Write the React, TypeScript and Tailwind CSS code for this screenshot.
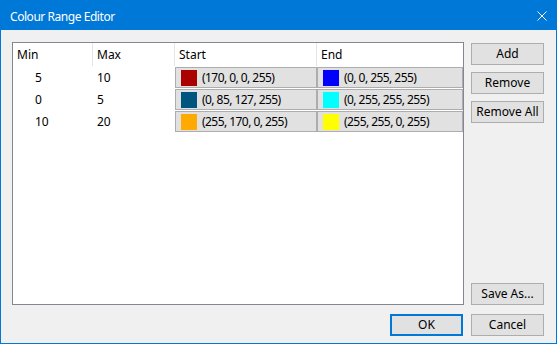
import React from 'react';

const rows = [
  { min: '5', max: '10', start: { c: '#aa0000', t: '(170, 0, 0, 255)' }, end: { c: '#0000ff', t: '(0, 0, 255, 255)' } },
  { min: '0', max: '5', start: { c: '#00557f', t: '(0, 85, 127, 255)' }, end: { c: '#00ffff', t: '(0, 255, 255, 255)' } },
  { min: '10', max: '20', start: { c: '#ffaa00', t: '(255, 170, 0, 255)' }, end: { c: '#ffff00', t: '(255, 255, 0, 255)' } },
];

function ColourButton({ colour, label }: { colour: string; label: string }) {
  return (
    <div className="mt-[1px] h-[21px] flex items-center border border-[#adadad] bg-[#e1e1e1] pl-[5px]">
      <div className="w-[16px] h-[16px]" style={{ backgroundColor: colour }} />
      <span className="ml-[5px] leading-none tracking-[-0.55px]">{label}</span>
    </div>
  );
}

function Button({ label, primary }: { label: string; primary?: boolean }) {
  return (
    <button
      className={`w-[73px] h-[22px] flex items-center justify-center bg-[#e1e1e1] leading-none ${
        primary ? 'border-2 border-[#0078d7]' : 'border border-[#adadad]'
      }`}
    >
      {label}
    </button>
  );
}

export default function App() {
  return (
    <div
      className="w-[557px] h-[344px] flex flex-col border border-[#0078d7] bg-[#f0f0f0] text-[12px] text-black"
      style={{ fontFamily: '"Noto Sans", "Open Sans", sans-serif' }}
    >
      {/* Title bar */}
      <div className="h-[29px] bg-[#0078d7] flex items-center justify-between text-white">
        <span className="pl-[9px] pt-[2px] tracking-[-0.45px]">Colour Range Editor</span>
        <svg width="10" height="10" viewBox="0 0 10 10" className="mr-[9px] mt-[1px]">
          <path d="M0.5 0.5 L9.5 9.5 M9.5 0.5 L0.5 9.5" stroke="white" strokeWidth="1" />
        </svg>
      </div>

      <div className="flex-1 flex flex-col pt-[12px] pl-[11px]">
        <div className="flex gap-[7px]">
          {/* List */}
          <div className="w-[452px] h-[263px] border border-[#828790] bg-white">
            <div className="grid grid-cols-[80px_82px_142px_146px] h-[23px]">
              <div className="border-r border-[#e5e5e5] pl-[4px] flex items-center">Min</div>
              <div className="border-r border-[#e5e5e5] pl-[4px] flex items-center">Max</div>
              <div className="border-r border-[#e5e5e5] pl-[4px] flex items-center">Start</div>
              <div className="pl-[4px] flex items-center">End</div>
            </div>
            {rows.map((r) => (
              <div key={r.min} className="grid grid-cols-[80px_82px_142px_146px] h-[22px]">
                <div className="pl-[22px] flex items-center pt-[1px]">{r.min}</div>
                <div className="pl-[4px] flex items-center pt-[1px]">{r.max}</div>
                <ColourButton colour={r.start.c} label={r.start.t} />
                <ColourButton colour={r.end.c} label={r.end.t} />
              </div>
            ))}
          </div>

          {/* Side buttons */}
          <div className="flex flex-col pt-[1px]">
            <div className="flex flex-col gap-[7px]">
              <Button label="Add" />
              <Button label="Remove" />
              <Button label="Remove All" />
            </div>
            <div className="mt-auto">
              <Button label="Save As..." />
            </div>
          </div>
        </div>

        <div className="flex justify-end gap-[8px] pr-[12px] mt-[9px]">
          <Button label="OK" primary />
          <Button label="Cancel" />
        </div>
      </div>
    </div>
  );
}
